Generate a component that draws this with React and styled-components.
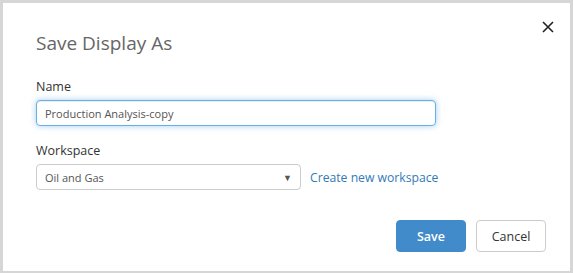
import React from "react";
import styled, { createGlobalStyle } from "styled-components";

const Global = createGlobalStyle`
  html, body { margin: 0; padding: 0; }
  body {
    background: #d6d6d6;
    font-family: "Open Sans", "Noto Sans", Arial, sans-serif;
  }
  * { box-sizing: border-box; }
`;

const Page = styled.div`
  width: 573px;
  height: 273px;
  padding: 3px 3px 2px 3px;
  display: flex;
`;

const Dialog = styled.div`
  flex: 1;
  background: #fff;
  position: relative;
  padding: 27px 24px 19px 33px;
  display: flex;
  flex-direction: column;
`;

const Title = styled.h1`
  margin: 0;
  font-size: 19px;
  font-weight: 400;
  color: #666;
  line-height: 26px;
`;

const CloseButton = styled.button`
  position: absolute;
  top: 13px;
  right: 11px;
  width: 22px;
  height: 22px;
  padding: 0;
  border: 0;
  background: transparent;
  display: flex;
  align-items: center;
  justify-content: center;
  cursor: pointer;
`;

const Field = styled.div`
  margin-top: ${(p) => p.$top}px;
  display: flex;
  flex-direction: column;
`;

const Label = styled.label`
  font-size: 12.5px;
  color: #333;
  line-height: 18px;
  margin-bottom: 4px;
`;

const Row = styled.div`
  display: flex;
  align-items: center;
  gap: 9px;
`;

const TextInput = styled.input`
  width: 400px;
  height: 26px;
  border: 1px solid #66afe9;
  border-radius: 4px;
  box-shadow: inset 0 1px 1px rgba(0,0,0,.075), 0 0 6px rgba(102,175,233,.6);
  padding: 0 8px;
  font-family: inherit;
  font-size: 11px;
  color: #555;
  outline: none;
`;

const Select = styled.div`
  width: 265px;
  height: 26px;
  border: 1px solid #ccc;
  border-radius: 4px;
  padding: 0 8px;
  display: flex;
  align-items: center;
  justify-content: space-between;
  font-size: 11px;
  color: #555;
`;

const Arrow = styled.span`
  font-size: 9px;
  color: #555;
`;

const Link = styled.a`
  font-size: 12.2px;
  color: #337ab7;
  text-decoration: none;
  cursor: pointer;
`;

const Footer = styled.div`
  margin-top: auto;
  display: flex;
  justify-content: flex-end;
  gap: 10px;
`;

const Button = styled.button`
  width: 70px;
  height: 32px;
  border-radius: 4px;
  font-family: inherit;
  font-size: 12.5px;
  cursor: pointer;
  border: 1px solid ${(p) => (p.$primary ? "#428bca" : "#ccc")};
  background: ${(p) => (p.$primary ? "#428bca" : "#fff")};
  color: ${(p) => (p.$primary ? "#fff" : "#333")};
  font-weight: ${(p) => (p.$primary ? 600 : 400)};
`;

export default function App() {
  return (
    <>
      <Global />
      <Page>
        <Dialog>
          <CloseButton aria-label="Close">
            <svg width="12" height="12" viewBox="0 0 12 12">
              <path d="M1 1L11 11M11 1L1 11" stroke="#222" strokeWidth="1.6" />
            </svg>
          </CloseButton>
          <Title>Save Display As</Title>
          <Field $top={22}>
            <Label>Name</Label>
            <TextInput defaultValue="Production Analysis-copy" />
          </Field>
          <Field $top={16}>
            <Label>Workspace</Label>
            <Row>
              <Select>
                <span>Oil and Gas</span>
                <Arrow>▼</Arrow>
              </Select>
              <Link>Create new workspace</Link>
            </Row>
          </Field>
          <Footer>
            <Button $primary>Save</Button>
            <Button>Cancel</Button>
          </Footer>
        </Dialog>
      </Page>
    </>
  );
}
